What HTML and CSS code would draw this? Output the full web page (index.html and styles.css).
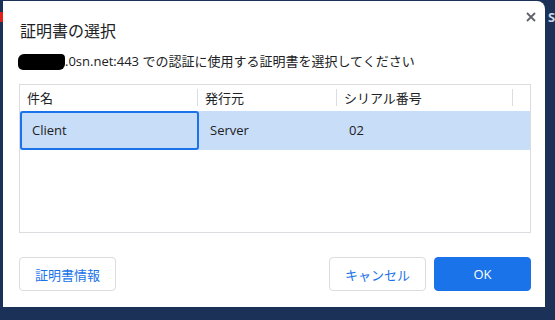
FILE: index.html
```html
<!DOCTYPE html>
<html lang="ja">
<head>
<meta charset="utf-8">
<link rel="stylesheet" href="styles.css">
</head>
<body>
<div class="bg-red"></div>
<div class="bg-s">S</div>
<div class="dialog">
  <div class="title-row">
    <h1 class="title">証明書の選択</h1>
    <button class="close" aria-label="閉じる">
      <svg width="10" height="10" viewBox="0 0 10 10"><path d="M1 1 L9 9 M9 1 L1 9" stroke="#5f6368" stroke-width="1.8" fill="none"/></svg>
    </button>
  </div>
  <p class="subtitle"><span class="redact"></span>.0sn.net:443 での認証に使用する証明書を選択してください</p>
  <div class="table">
    <div class="thead">
      <div class="th">件名</div>
      <div class="th">発行元</div>
      <div class="th">シリアル番号</div>
      <div class="th last"></div>
    </div>
    <div class="tr selected">
      <div class="td focus">Client</div>
      <div class="td">Server</div>
      <div class="td">02</div>
      <div class="td"></div>
    </div>
  </div>
  <div class="actions">
    <button class="btn">証明書情報</button>
    <div class="spacer"></div>
    <button class="btn">キャンセル</button>
    <button class="btn primary">OK</button>
  </div>
</div>
</body>
</html>
```

FILE: styles.css
```css
html, body {
  margin: 0;
  padding: 0;
}
body {
  background: #1b3157;
  width: 555px;
  height: 320px;
  overflow: hidden;
  position: relative;
  font-family: "Open Sans", "Noto Sans CJK JP", sans-serif;
  color: #202124;
  padding: 1px 0 0 3px;
  box-sizing: border-box;
}
.bg-red {
  position: absolute;
  left: 0;
  top: 12px;
  width: 3px;
  height: 10px;
  background: #e0201b;
}
.bg-s {
  position: absolute;
  left: 548px;
  top: 8px;
  font: bold 13px "Open Sans", sans-serif;
  color: #c9d6ea;
}
.dialog {
  width: 542px;
  height: 306px;
  background: #fff;
  border-radius: 0 8px 0 0;
  box-sizing: border-box;
  padding: 0 14px 16px 16px;
  display: flex;
  flex-direction: column;
  position: relative;
}
.title-row {
  display: flex;
  align-items: flex-start;
  justify-content: space-between;
  height: 50px;
}
.title {
  margin: 17px 0 0 1px;
  font-size: 16px;
  font-weight: normal;
  line-height: 24px;
  font-family: "Noto Sans CJK JP", sans-serif;
}
.close {
  border: 0;
  background: none;
  padding: 0;
  margin: 10px -6px 0 0;
  width: 12px;
  height: 12px;
  display: flex;
  align-items: center;
  justify-content: center;
}
.subtitle {
  margin: 0;
  font-size: 13px;
  line-height: 20px;
  height: 33px;
  display: flex;
  align-items: flex-start;
}
.redact {
  display: inline-block;
  width: 47px;
  height: 16px;
  margin: 3px 0 0 -1px;
  background: #000;
  border-radius: 6px 4px 6px 5px;
}
.table {
  border: 1px solid #dadce0;
  height: 149px;
  box-sizing: border-box;
  display: flex;
  flex-direction: column;
}
.thead, .tr {
  display: grid;
  grid-template-columns: 178px 139px 176px 1fr;
}
.thead {
  height: 25px;
  margin-bottom: 1px;
}
.th {
  font-size: 13px;
  line-height: 25px;
  padding-left: 7px;
  position: relative;
  font-family: "Noto Sans CJK JP", sans-serif;
}
.th::after {
  content: "";
  position: absolute;
  right: 0;
  top: 4px;
  height: 17px;
  width: 1px;
  background: #dadce0;
}
.th.last::after {
  display: none;
}
.tr {
  height: 39px;
}
.tr.selected {
  background: #c8ddf7;
}
.td {
  font-size: 13px;
  line-height: 39px;
  padding-left: 12px;
  box-sizing: border-box;
}
.td.focus {
  border: 2px solid #1a73e8;
  border-radius: 3px;
  line-height: 35px;
  padding-left: 10px;
  margin-right: -1px;
}
.actions {
  margin-top: auto;
  display: flex;
  gap: 8px;
}
.spacer {
  flex: 1;
}
.btn {
  width: 97px;
  height: 34px;
  border: 1px solid #dadce0;
  border-radius: 4px;
  background: #fff;
  color: #1a73e8;
  font-size: 13px;
  font-family: "Open Sans", "Noto Sans CJK JP", sans-serif;
  padding: 0;
}
.btn.primary {
  background: #1a73e8;
  border-color: #1a73e8;
  color: #fff;
}
```
